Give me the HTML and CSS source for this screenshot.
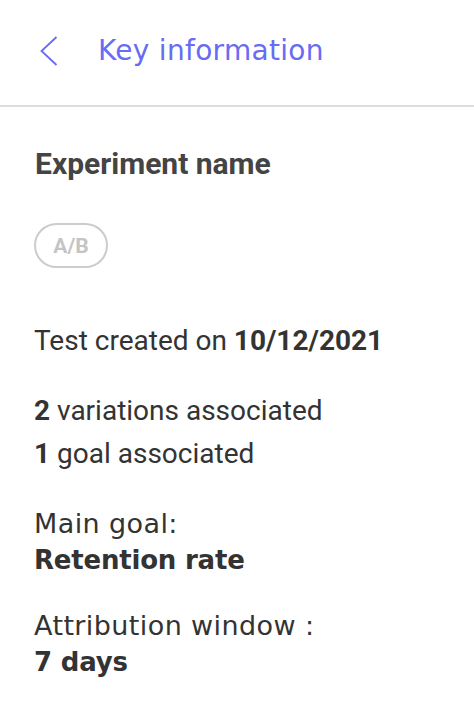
FILE: index.html
```html
<!DOCTYPE html>
<html lang="en">
<head>
    <meta charset="UTF-8">
    <meta name="viewport" content="width=device-width, initial-scale=1.0">
    <title>Key information</title>
    <link rel="stylesheet" href="styles.css">
</head>
<body>
    <header class="topbar">
        <a class="back" href="#" aria-label="Back">
            <svg width="18" height="30" viewBox="0 0 18 30">
                <polyline points="16.5,1 1.5,15 16.5,29" fill="none" stroke="currentColor" stroke-width="1.8"/>
            </svg>
        </a>
        <h1>Key information</h1>
    </header>
    <main class="panel">
        <h2>Experiment name</h2>
        <span class="pill">A/B</span>
        <p class="created">Test created on <b>10/12/2021</b></p>
        <div class="counts">
            <p><b>2</b> variations associated</p>
            <p><b>1</b> goal associated</p>
        </div>
        <div class="field">
            <p>Main goal:</p>
            <p class="value">Retention rate</p>
        </div>
        <div class="field">
            <p>Attribution window :</p>
            <p class="value">7 days</p>
        </div>
    </main>
</body>
</html>
```

FILE: styles.css
```css
:root {
    --accent: #676cf3;
    --text: #333333;
    --line: #dddddd;
    --pill-line: #cccccc;
    --muted: #c4c4c4;
}
body {
    margin: 0;
    background: #ffffff;
    color: var(--text);
    font-family: 'Roboto', sans-serif;
}
p {
    margin: 0;
}
.topbar {
    box-sizing: border-box;
    display: flex;
    align-items: center;
    height: 107px;
    padding: 0 0 4px 40px;
    border-bottom: 2px solid var(--line);
}
.back {
    display: flex;
    color: var(--accent);
    margin-right: 40px;
}
.topbar h1 {
    margin: 0;
    font-family: 'DejaVu Sans', sans-serif;
    font-weight: normal;
    font-size: 28px;
    letter-spacing: 0.3px;
    color: var(--accent);
}
.panel {
    display: flex;
    flex-direction: column;
    align-items: flex-start;
    padding: 39px 34px 0;
}
.panel h2 {
    margin: 0 0 41px 1px;
    font-size: 30px;
    line-height: 36px;
    font-weight: 700;
    color: #444444;
}
.pill {
    box-sizing: border-box;
    width: 74px;
    height: 45px;
    display: flex;
    align-items: center;
    justify-content: center;
    border: 2px solid var(--pill-line);
    border-radius: 23px;
    color: var(--muted);
    font-weight: 700;
    font-size: 21px;
    margin-bottom: 51px;
}
.created,
.counts p {
    font-size: 28px;
    line-height: 43px;
}
.created {
    margin-bottom: 27px;
}
.counts {
    margin-bottom: 31px;
}
.field {
    font-family: 'DejaVu Sans', sans-serif;
    font-size: 27px;
    line-height: 36px;
    letter-spacing: 0.4px;
    margin-bottom: 30px;
}
.field .value {
    font-size: 26px;
    font-weight: 700;
    letter-spacing: -0.2px;
}
```
